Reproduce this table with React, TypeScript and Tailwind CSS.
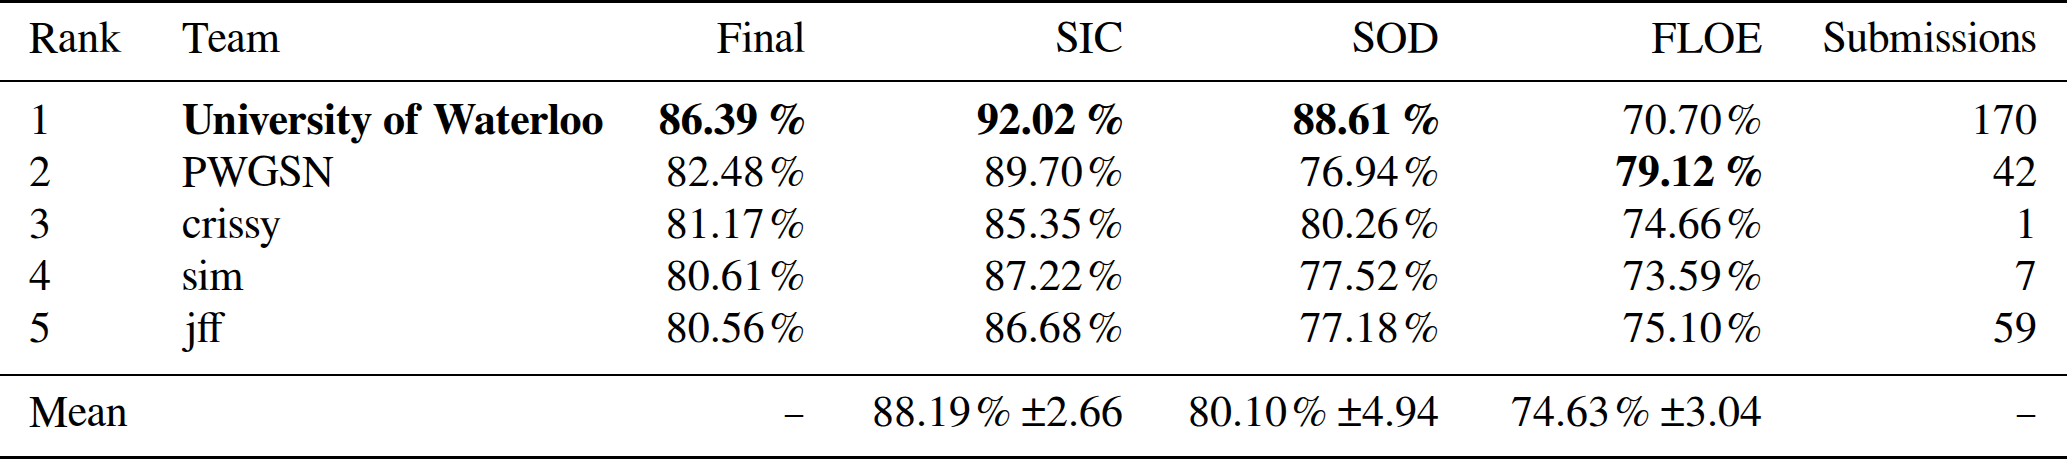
const rows = [
  { rank: "1", team: "University of Waterloo", teamBold: true, final: ["86.39", true], sic: ["92.02", true], sod: ["88.61", true], floe: ["70.70", false], subs: "170" },
  { rank: "2", team: "PWGSN", teamBold: false, final: ["82.48", false], sic: ["89.70", false], sod: ["76.94", false], floe: ["79.12", true], subs: "42" },
  { rank: "3", team: "crissy", teamBold: false, final: ["81.17", false], sic: ["85.35", false], sod: ["80.26", false], floe: ["74.66", false], subs: "1" },
  { rank: "4", team: "sim", teamBold: false, final: ["80.61", false], sic: ["87.22", false], sod: ["77.52", false], floe: ["73.59", false], subs: "7" },
  { rank: "5", team: "jff", teamBold: false, final: ["80.56", false], sic: ["86.68", false], sod: ["77.18", false], floe: ["75.10", false], subs: "59" },
] as const;

const grid =
  "grid grid-cols-[153px_300px_323px_318px_316px_323px_275px] pl-[29px] pr-[30px] h-[52px] leading-[52px] whitespace-nowrap";

function Pct({ v, bold }: { v: string; bold: boolean }) {
  return (
    <span className={bold ? "font-bold" : ""}>
      {v}
      <span className={bold ? "ml-[12px]" : "ml-[5px]"}>%</span>
    </span>
  );
}

function MeanCell({ v, sd }: { v: string; sd: string }) {
  return (
    <span>
      {v}
      <span className="ml-[5px]">%</span>
      <span className="ml-[10px]">±{sd}</span>
    </span>
  );
}

export default function App() {
  return (
    <div className="w-[2067px] h-[459px] bg-white text-black text-[44px] overflow-hidden font-['FreeSerif','Liberation_Serif',serif]">
      {/* top rule */}
      <div className="h-[3px] bg-black" />

      {/* header */}
      <div className={`${grid} mt-[10px]`}>
        <div>Rank</div>
        <div>Team</div>
        <div className="text-right">Final</div>
        <div className="text-right">SIC</div>
        <div className="text-right">SOD</div>
        <div className="text-right">FLOE</div>
        <div className="text-right">Submissions</div>
      </div>

      <div className="h-[2px] bg-black mt-[15px]" />

      {/* body */}
      <div className="mt-[13px]">
        {rows.map((r) => (
          <div key={r.rank} className={grid}>
            <div>{r.rank}</div>
            <div className={r.teamBold ? "font-bold" : ""}>{r.team}</div>
            <div className="text-right"><Pct v={r.final[0]} bold={r.final[1]} /></div>
            <div className="text-right"><Pct v={r.sic[0]} bold={r.sic[1]} /></div>
            <div className="text-right"><Pct v={r.sod[0]} bold={r.sod[1]} /></div>
            <div className="text-right"><Pct v={r.floe[0]} bold={r.floe[1]} /></div>
            <div className="text-right">{r.subs}</div>
          </div>
        ))}
      </div>

      <div className="h-[2px] bg-black mt-[19px]" />

      {/* mean */}
      <div className={`${grid} mt-[11px]`}>
        <div>Mean</div>
        <div />
        <div className="text-right">–</div>
        <div className="text-right"><MeanCell v="88.19" sd="2.66" /></div>
        <div className="text-right"><MeanCell v="80.10" sd="4.94" /></div>
        <div className="text-right"><MeanCell v="74.63" sd="3.04" /></div>
        <div className="text-right">–</div>
      </div>

      <div className="h-[3px] bg-black mt-[17px]" />
    </div>
  );
}
